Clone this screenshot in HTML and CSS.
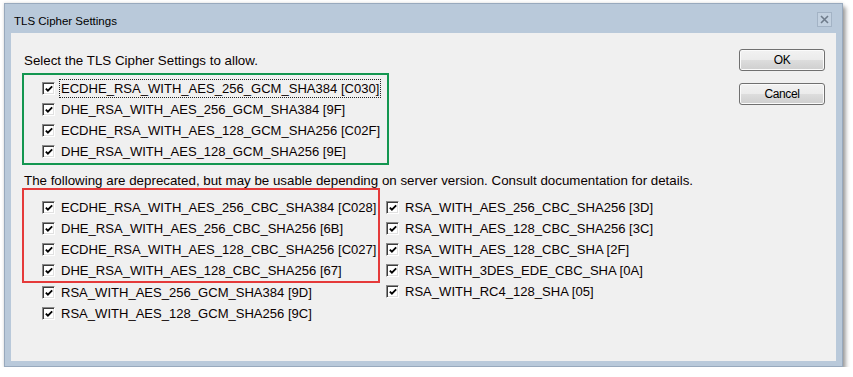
FILE: index.html
```html
<!DOCTYPE html>
<html lang="en">
<head>
    <meta charset="UTF-8">
    <title>TLS Cipher Settings</title>
    <link rel="stylesheet" href="styles.css">
</head>
<body>
    <svg class="defs" width="0" height="0">
        <symbol id="tick" viewBox="0 0 11 11">
            <polyline points="2,5 4.3,7.4 9,2.6" fill="none" stroke="#000" stroke-width="2"/>
        </symbol>
    </svg>

    <div class="window">
        <div class="titlebar">
            <span class="title">TLS Cipher Settings</span>
            <span class="close-btn">
                <svg width="9" height="9" viewBox="0 0 9 9">
                    <path d="M1 1 L8 8 M8 1 L1 8" stroke="#6f7c8b" stroke-width="1.6"/>
                </svg>
            </span>
        </div>

        <div class="client">
            <div class="main">
                <p class="note">Select the TLS Cipher Settings to allow.</p>

                <div class="group group-green">
                    <label class="option"><span class="check"><svg><use href="#tick"/></svg></span><span class="label focused">ECDHE_RSA_WITH_AES_256_GCM_SHA384 [C030]</span></label>
                    <label class="option"><span class="check"><svg><use href="#tick"/></svg></span><span class="label">DHE_RSA_WITH_AES_256_GCM_SHA384 [9F]</span></label>
                    <label class="option"><span class="check"><svg><use href="#tick"/></svg></span><span class="label">ECDHE_RSA_WITH_AES_128_GCM_SHA256 [C02F]</span></label>
                    <label class="option"><span class="check"><svg><use href="#tick"/></svg></span><span class="label">DHE_RSA_WITH_AES_128_GCM_SHA256 [9E]</span></label>
                </div>

                <p class="note note-deprecated">The following are deprecated, but may be usable depending on server version. Consult documentation for details.</p>

                <div class="legacy">
                    <div class="legacy-col legacy-left">
                        <div class="group group-red">
                            <label class="option"><span class="check"><svg><use href="#tick"/></svg></span><span class="label">ECDHE_RSA_WITH_AES_256_CBC_SHA384 [C028]</span></label>
                            <label class="option"><span class="check"><svg><use href="#tick"/></svg></span><span class="label">DHE_RSA_WITH_AES_256_CBC_SHA256 [6B]</span></label>
                            <label class="option"><span class="check"><svg><use href="#tick"/></svg></span><span class="label">ECDHE_RSA_WITH_AES_128_CBC_SHA256 [C027]</span></label>
                            <label class="option"><span class="check"><svg><use href="#tick"/></svg></span><span class="label">DHE_RSA_WITH_AES_128_CBC_SHA256 [67]</span></label>
                        </div>
                        <div class="loose">
                            <label class="option"><span class="check"><svg><use href="#tick"/></svg></span><span class="label">RSA_WITH_AES_256_GCM_SHA384 [9D]</span></label>
                            <label class="option"><span class="check"><svg><use href="#tick"/></svg></span><span class="label">RSA_WITH_AES_128_GCM_SHA256 [9C]</span></label>
                        </div>
                    </div>
                    <div class="legacy-col legacy-right">
                        <label class="option"><span class="check"><svg><use href="#tick"/></svg></span><span class="label">RSA_WITH_AES_256_CBC_SHA256 [3D]</span></label>
                        <label class="option"><span class="check"><svg><use href="#tick"/></svg></span><span class="label">RSA_WITH_AES_128_CBC_SHA256 [3C]</span></label>
                        <label class="option"><span class="check"><svg><use href="#tick"/></svg></span><span class="label">RSA_WITH_AES_128_CBC_SHA [2F]</span></label>
                        <label class="option"><span class="check"><svg><use href="#tick"/></svg></span><span class="label">RSA_WITH_3DES_EDE_CBC_SHA [0A]</span></label>
                        <label class="option"><span class="check"><svg><use href="#tick"/></svg></span><span class="label">RSA_WITH_RC4_128_SHA [05]</span></label>
                    </div>
                </div>
            </div>

            <div class="actions">
                <button class="btn">OK</button>
                <button class="btn">Cancel</button>
            </div>
        </div>
    </div>
</body>
</html>
```

FILE: styles.css
```css
* {
    margin: 0;
    padding: 0;
    box-sizing: border-box;
}

body {
    background: #ffffff;
    font-family: 'Liberation Sans', Arial, sans-serif;
    color: #0a0000;
}

.defs {
    position: absolute;
}

.window {
    margin: 3px 0 0 4px;
    width: 839px;
    height: 364px;
    display: flex;
    flex-direction: column;
    padding: 0 6px 5px 6px;
    background: #b9c9da;
    border: 1px solid #98a9bd;
    box-shadow: 3px 4px 4px rgba(0,0,0,0.35), 0 0 3px rgba(0,0,0,0.15);
}

.titlebar {
    height: 29px;
    display: flex;
    align-items: flex-start;
}

.title {
    margin: 10px 0 0 3px;
    font-size: 11.5px;
    line-height: 14px;
    color: #000;
}

.close-btn {
    margin: 8px 4px 0 auto;
    width: 15px;
    height: 15px;
    display: flex;
    align-items: center;
    justify-content: center;
    border: 1px solid #a3b3c5;
    background: #c3d1e0;
}

.client {
    flex: 1;
    display: flex;
    background: #f0f0f0;
}

.main {
    flex: 1;
    padding: 20px 0 0 11px;
}

.note {
    margin-left: 2px;
    font-size: 13.33px;
    line-height: 15px;
    white-space: nowrap;
}

.note-deprecated {
    margin-top: 8px;
}

.group {
    border: 2px solid;
}

.group-green {
    margin-top: 5px;
    width: 367px;
    padding: 3px 0 1px 18px;
    border-color: #139650;
}

.group-red {
    width: 358px;
    padding: 7px 0 0 18px;
    margin-bottom: -1px;
    border-color: #e53a3a;
}

.legacy {
    display: flex;
    gap: 6px;
}

.legacy-left {
    width: 358px;
}

.loose {
    padding-left: 20px;
}

.legacy-right {
    padding-top: 9px;
}

.option {
    display: flex;
    align-items: center;
    gap: 6px;
    height: 21px;
    font-size: 13.05px;
    line-height: 15px;
    white-space: nowrap;
}

.check {
    width: 13px;
    height: 13px;
    flex-shrink: 0;
    display: flex;
    align-items: center;
    justify-content: center;
    background: #ffffff;
    border: 1px solid;
    border-color: #8a8a8a #ffffff #ffffff #8a8a8a;
    box-shadow: inset 1px 1px 0 #3c3c3c, inset -1px -1px 0 #e0e0e0;
}

.check svg {
    width: 10px;
    height: 10px;
}

.focused {
    outline: 1px dotted #222;
    outline-offset: 1px;
}

.actions {
    width: 97px;
    padding-top: 16px;
    display: flex;
    flex-direction: column;
    gap: 12px;
}

.btn {
    width: 86px;
    height: 22px;
    font-family: 'Liberation Sans', Arial, sans-serif;
    font-size: 12px;
    letter-spacing: -0.4px;
    color: #000;
    border: 1px solid #707070;
    border-radius: 3px;
    background: linear-gradient(#f2f2f2 0%, #ebebeb 50%, #dddddd 50%, #cfcfcf 100%);
    box-shadow: inset 0 0 0 1px #fbfbfb;
}
```
